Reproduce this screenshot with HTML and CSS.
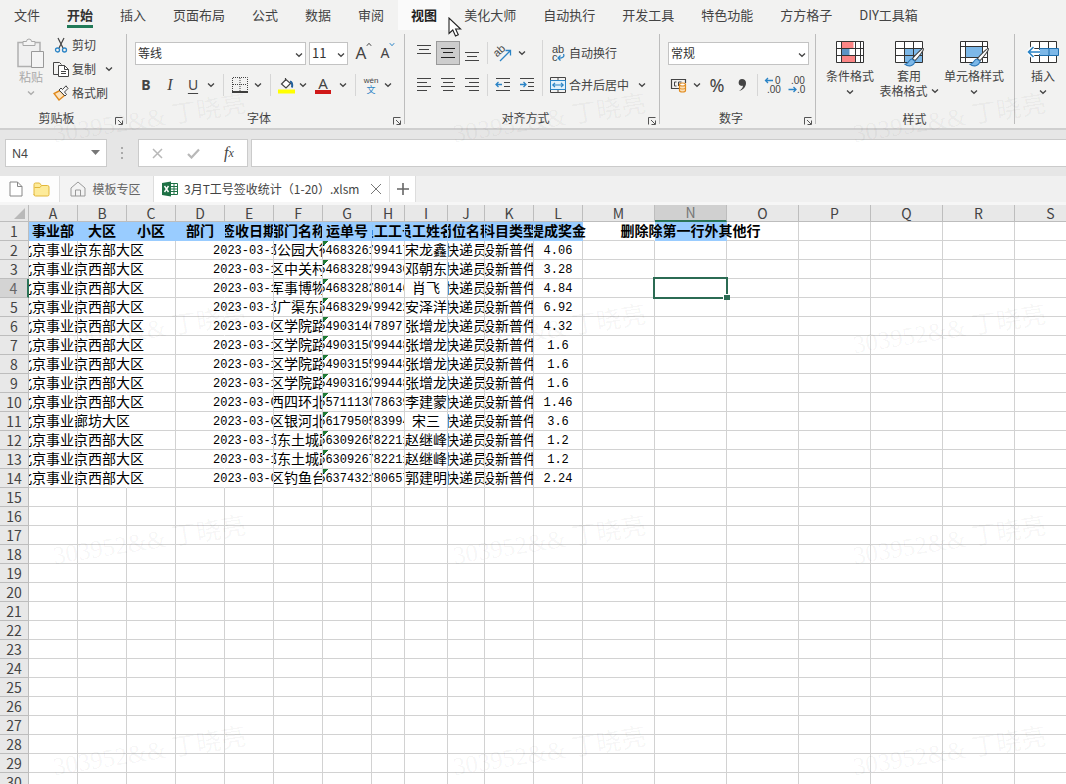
FILE: index.html
```html
<!DOCTYPE html>
<html lang="zh-CN">
<head>
<meta charset="utf-8">
<title>3月T工号签收统计（1-20）.xlsm</title>
<link rel="stylesheet" href="styles.css">
</head>
<body>
<svg class="defs" aria-hidden="true">
  <defs>
    <symbol id="chev" viewBox="0 0 8 6"><path d="M1 1.5 4 4.3 7 1.5" fill="none" stroke="#444" stroke-width="1.3"/></symbol>
    <symbol id="launch" viewBox="0 0 10 10"><path d="M1.5 8.5v-7h7M4 4l4 4M8.5 4.5v4h-4" fill="none" stroke="#555" stroke-width="1"/></symbol>
    <symbol id="brush" viewBox="0 0 20 20"><path d="M18.5 1.5c1 .8-5 8.500-8 11.500l-2.500-2C10.500 8 17.500.8 18.500 1.500z" fill="#fff" stroke="#444"/><path d="M7.500 11.500c-3 0-2 4-6.500 5 3 2.500 8.500 2 9.500-3z" fill="#7db8e8" stroke="#2b78b8"/></symbol>
  </defs>
</svg>
<div class="app">
  <nav class="tabs">
    <button class="tab">文件</button>
    <button class="tab active">开始</button>
    <button class="tab">插入</button>
    <button class="tab">页面布局</button>
    <button class="tab">公式</button>
    <button class="tab">数据</button>
    <button class="tab">审阅</button>
    <button class="tab hover">视图<svg class="pointer" viewBox="0 0 14 20"><path d="M1 1v15.500l3.800-3.500 2.700 6 2.800-1.200-2.700-5.800h5z" fill="#fff" stroke="#222" stroke-width="1.100"/></svg></button>
    <button class="tab">美化大师</button>
    <button class="tab">自动执行</button>
    <button class="tab">开发工具</button>
    <button class="tab">特色功能</button>
    <button class="tab">方方格子</button>
    <button class="tab">DIY工具箱</button>
  </nav>

  <div class="ribbon">
    <section class="group g-clip">
      <div class="clip-body">
        <button class="big paste">
          <svg width="28" height="31" viewBox="0 0 28 31"><path d="M1 4.500h22v24H1z" fill="#f0f0f0" stroke="#b0b0b0" stroke-width="1.500"/><path d="M6 7.500v-4h3.500a2.500 2.500 0 0 1 5 0H18v4z" fill="#f4f4f4" stroke="#a8a8a8"/><path d="M14.500 13.500h12v16h-12z" fill="#f4f4f4" stroke="#999"/></svg>
          <span>粘贴</span>
          <svg class="chev" width="8" height="6"><use href="#chev"/></svg>
        </button>
        <div class="clip-list">
          <button class="item"><svg width="16" height="16" viewBox="0 0 16 16"><path d="M5 1l5 10M11 1 6 11" stroke="#444" fill="none" stroke-width="1.200"/><circle cx="4.500" cy="13" r="2" fill="none" stroke="#2b84c6" stroke-width="1.300"/><circle cx="11.500" cy="13" r="2" fill="none" stroke="#2b84c6" stroke-width="1.300"/></svg>剪切</button>
          <button class="item"><svg width="16" height="16" viewBox="0 0 16 16"><path d="M5.500 13.500h-5V1.500h6l2 2" fill="none" stroke="#444"/><path d="M5.500 4.500h6l4 4v7h-10z" fill="#fff" stroke="#444"/><path d="M11.500 4.500v4h4M8 10.500h5M8 12.500h5" fill="none" stroke="#444"/></svg>复制<svg class="chev end" width="8" height="6"><use href="#chev"/></svg></button>
          <button class="item"><svg width="16" height="16" viewBox="0 0 16 16"><path d="M7 5.500 1 8.500l5 6.500 5.500-4.500z" fill="#fde3bd" stroke="#e08a1e" stroke-width="1.400"/><path d="M6 5l6 6 1.500-1.500-2-2.500L15 3.500 13 .8 9.500 4.500 8 3z" fill="#f6f6f6" stroke="#444"/></svg>格式刷</button>
        </div>
      </div>
      <footer class="caption"><span>剪贴板</span><button class="launch" aria-label="剪贴板设置"><svg width="10" height="10"><use href="#launch"/></svg></button></footer>
    </section>

    <section class="group g-font">
      <div class="rows">
        <div class="row">
          <label class="combo wide"><select aria-label="字体"><option>等线</option></select><svg width="8" height="6"><use href="#chev"/></svg></label>
          <label class="combo small"><select aria-label="字号"><option>11</option></select><svg width="8" height="6"><use href="#chev"/></svg></label>
          <button class="b24 grow" aria-label="增大字号"><span class="a-big">A</span><svg width="6" height="5" viewBox="0 0 6 5"><path d="M.8 3.800 3 1.300l2.200 2.500" fill="none" stroke="#444"/></svg></button>
          <button class="b24 grow" aria-label="减小字号"><span class="a-small">A</span><svg width="6" height="5" viewBox="0 0 6 5"><path d="M.8 1.200 3 3.700l2.200-2.500" fill="none" stroke="#2b84c6"/></svg></button>
        </div>
        <div class="row">
          <button class="b24 fmt bold">B</button><button class="b24 fmt italic">I</button><button class="b22 fmt under">U</button>
          <button class="drop" aria-label="下划线选项"><svg width="8" height="6"><use href="#chev"/></svg></button>
          <i class="sep far"></i>
          <button class="b22" aria-label="边框"><svg width="16" height="16" viewBox="0 0 16 16"><path d="M.5 14V.5h15V14M8 1v14M1 7.500h14" fill="none" stroke="#444" stroke-dasharray="1 1"/><path d="M0 15h16" stroke="#111" stroke-width="1.600"/></svg></button>
          <button class="drop" aria-label="边框选项"><svg width="8" height="6"><use href="#chev"/></svg></button>
          <i class="sep far"></i>
          <button class="b20" aria-label="填充颜色"><svg width="17" height="17" viewBox="0 0 17 17"><path d="M7.500 1v3M8 2.500 3.500 7 8 11l4.500-4.500z" fill="#fff" stroke="#444" stroke-width="1.200"/><path d="M12 4.500c2 .5 2.500 3 2 6" fill="none" stroke="#225f9c" stroke-width="2"/><path d="M0 12.500h17v4H0z" fill="#ff0"/></svg></button>
          <button class="drop" aria-label="填充选项"><svg width="8" height="6"><use href="#chev"/></svg></button>
          <button class="b26 fontcolor" aria-label="字体颜色"><span>A</span><i></i></button>
          <button class="drop" aria-label="字体颜色选项"><svg width="8" height="6"><use href="#chev"/></svg></button>
          <i class="sep far"></i>
          <button class="b20 pinyin"><span>wén</span><b>文</b></button>
          <button class="drop" aria-label="拼音选项"><svg width="8" height="6"><use href="#chev"/></svg></button>
        </div>
      </div>
      <footer class="caption"><span>字体</span><button class="launch" aria-label="字体设置"><svg width="10" height="10"><use href="#launch"/></svg></button></footer>
    </section>

    <section class="group g-align">
      <div class="split">
        <div class="rows">
          <div class="row">
            <button class="b24" aria-label="顶端对齐"><svg width="16" height="16" viewBox="0 0 16 16"><path d="M1 .5h14M3 4.500h10M1 8.500h14" stroke="#444" fill="none"/></svg></button>
            <button class="b24 on" aria-label="垂直居中"><svg width="16" height="16" viewBox="0 0 16 16"><path d="M1 3.500h14M3 7.500h10M1 12.500h14" stroke="#222" fill="none"/></svg></button>
            <button class="b24" aria-label="底端对齐"><svg width="16" height="16" viewBox="0 0 16 16"><path d="M1 7.500h14M3 11.500h10M1 15.500h14" stroke="#444" fill="none"/></svg></button>
            <i class="sep"></i>
            <button class="b24" aria-label="方向"><svg width="20" height="20" viewBox="0 0 20 20"><text x="1" y="11" font-size="11" fill="#444" transform="rotate(-42 7 9)">ab</text><path d="M7 18 17 8M12.500 7.500h5v5" fill="none" stroke="#2b84c6" stroke-width="1.300"/></svg></button>
            <button class="drop" aria-label="方向选项"><svg width="8" height="6"><use href="#chev"/></svg></button>
          </div>
          <div class="row">
            <button class="b24" aria-label="左对齐"><svg width="16" height="16" viewBox="0 0 16 16"><path d="M1 1.500h14M1 5.500h10M1 9.500h14M1 13.500h10" stroke="#444" fill="none"/></svg></button>
            <button class="b24" aria-label="居中"><svg width="16" height="16" viewBox="0 0 16 16"><path d="M1 1.500h14M3 5.500h10M1 9.500h14M3 13.500h10" stroke="#444" fill="none"/></svg></button>
            <button class="b24" aria-label="右对齐"><svg width="16" height="16" viewBox="0 0 16 16"><path d="M1 1.500h14M5 5.500h10M1 9.500h14M5 13.500h10" stroke="#444" fill="none"/></svg></button>
            <i class="sep"></i>
            <button class="b24" aria-label="减少缩进"><svg width="16" height="16" viewBox="0 0 16 16"><path d="M1 1.500h14M9 5.500h6M9 9.500h6M1 13.500h14" stroke="#444" fill="none"/><path d="M7 7.500H1M3.500 5 1 7.500 3.500 10" fill="none" stroke="#2b84c6" stroke-width="1.300"/></svg></button>
            <button class="b24" aria-label="增加缩进"><svg width="16" height="16" viewBox="0 0 16 16"><path d="M1 1.500h14M9 5.500h6M9 9.500h6M1 13.500h14" stroke="#444" fill="none"/><path d="M1 7.500h6M4.500 5 7 7.500 4.500 10" fill="none" stroke="#2b84c6" stroke-width="1.300"/></svg></button>
          </div>
        </div>
        <i class="sep tall"></i>
        <div class="rows">
          <div class="row"><button class="item"><svg width="16" height="18" viewBox="0 0 16 18"><text x="2" y="9" font-size="11" fill="#444">ab</text><text x="2" y="17" font-size="11" fill="#444">c</text><path d="M13.500 10c1.500 3-1.500 4.500-5.500 4M10.500 11.500 8 14l2.500 2.500" fill="none" stroke="#2b84c6" stroke-width="1.200"/></svg>自动换行</button></div>
          <div class="row"><button class="item"><svg width="16" height="16" viewBox="0 0 16 16"><path d="M.5.500h15v15H.5zM8 .5v3M8 12.500v3" fill="none" stroke="#444"/><path d="M.5 3.500h15v9H.5z" fill="#e3f1fb" stroke="#2b84c6"/><path d="M3 8h10M5 5.800 2.800 8 5 10.200M11 5.800 13.200 8 11 10.200" fill="none" stroke="#2b84c6" stroke-width="1.200"/></svg>合并后居中</button><button class="drop" aria-label="合并选项"><svg width="8" height="6"><use href="#chev"/></svg></button></div>
        </div>
      </div>
      <footer class="caption"><span>对齐方式</span><button class="launch" aria-label="对齐设置"><svg width="10" height="10"><use href="#launch"/></svg></button></footer>
    </section>

    <section class="group g-num">
      <div class="rows">
        <div class="row"><label class="combo format"><select aria-label="数字格式"><option>常规</option></select><svg width="8" height="6"><use href="#chev"/></svg></label></div>
        <div class="row">
          <button class="b22" aria-label="会计格式"><svg width="18" height="16" viewBox="0 0 18 16"><path d="M9 11.500H1.500v-9h14V6" fill="none" stroke="#444" stroke-width="1.200"/><path d="M6.500 5h-2v4h2M8.500 9V5h3" fill="none" stroke="#444"/><path d="M9.500 7.500v6c0 2 6 2 6 0v-6" fill="#fbe0b8" stroke="#e08a1e" stroke-width="1.200"/><ellipse cx="12.500" cy="7.500" rx="3" ry="1.500" fill="#fff" stroke="#e08a1e" stroke-width="1.200"/><path d="M9.500 10.500c0 2 6 2 6 0" fill="none" stroke="#e08a1e"/></svg></button>
          <button class="drop" aria-label="会计选项"><svg width="8" height="6"><use href="#chev"/></svg></button>
          <button class="b26 percent">%</button>
          <button class="b24" aria-label="千位分隔"><svg width="10" height="14" viewBox="0 0 10 14"><path d="M5 1a3.500 3.500 0 0 0-1 6.800c.8.300 1.500.1 2 0C5.800 10 4.500 11.500 2 13c4-1 7-4 7-8C9 2.500 7.200 1 5 1z" fill="#444"/></svg></button>
          <i class="sep"></i>
          <button class="b24" aria-label="增加小数位"><svg width="18" height="18" viewBox="0 0 18 18"><text x="11" y="8" font-size="10" fill="#444">0</text><text x="3" y="17" font-size="10" fill="#444">.00</text><path d="M9 4.500H1.500M4 2 1.500 4.500 4 7" fill="none" stroke="#2b84c6" stroke-width="1.300"/></svg></button>
          <button class="b24" aria-label="减少小数位"><svg width="18" height="18" viewBox="0 0 18 18"><text x="3" y="8" font-size="10" fill="#444">.00</text><text x="9" y="17" font-size="10" fill="#444">.0</text><path d="M.5 13.500H8M5.500 11 8 13.500 5.500 16" fill="none" stroke="#2b84c6" stroke-width="1.300"/></svg></button>
        </div>
      </div>
      <footer class="caption"><span>数字</span><button class="launch" aria-label="数字设置"><svg width="10" height="10"><use href="#launch"/></svg></button></footer>
    </section>

    <section class="group g-style">
      <div class="bigs">
        <button class="big w60">
          <svg width="28" height="28" viewBox="0 0 28 28"><path d="M.5 1.500h27v21H.5z" fill="#fff"/><path d="M5.500 1.500h12v7h-12zM5.500 15.500h14v7h-14z" fill="#fa8585"/><path d="M5.500 8.500h8v7h-8z" fill="#5c93c4"/><path d="M.5 1.500h27v21H.5zM.5 8.500h27M.5 15.500h27M5.500 1.500v21M19.500 1.500v21M24.500 1.500v21" fill="none" stroke="#333"/></svg>
          <span>条件格式</span><svg class="chev" width="8" height="6"><use href="#chev"/></svg>
        </button>
        <button class="big w58">
          <svg width="31" height="28" viewBox="0 0 31 28"><path d="M1.500 1.500h27v21h-27z" fill="#fff"/><path d="M10.500 8.500h18v14h-18z" fill="#7db8e8"/><path d="M1.500 1.500h27v21h-27zM1.500 8.500h27M1.500 15.500h27M10.500 1.500v21M19.500 1.500v21" fill="none" stroke="#333"/><use href="#brush" x="10" y="7" width="21" height="21"/></svg>
          <span>套用</span><span>表格格式<svg class="inline" width="8" height="6"><use href="#chev"/></svg></span>
        </button>
        <button class="big w72">
          <svg width="31" height="28" viewBox="0 0 31 28"><path d="M1.500 1.500h27v21h-27z" fill="#fff"/><path d="M6.500 6.500h17v11h-17z" fill="#7db8e8"/><path d="M1.500 1.500h27v21h-27zM1.500 6.500h27M1.500 17.500h27M6.500 1.500v21M23.500 1.500v21" fill="none" stroke="#333"/><use href="#brush" x="10" y="7" width="21" height="21"/></svg>
          <span>单元格样式</span><svg class="chev" width="8" height="6"><use href="#chev"/></svg>
        </button>
      </div>
      <footer class="caption"><span>样式</span></footer>
    </section>

    <section class="group g-cells">
      <div class="bigs">
        <button class="big w48">
          <svg width="32" height="28" viewBox="0 0 32 28"><path d="M3.500 1.500h26v21h-26z" fill="#fff"/><path d="M3.500 1.500h26v21h-26zM3.500 8.500h26M3.500 15.500h26M12.500 1.500v21M21.500 1.500v21" fill="none" stroke="#333"/><path d="M12.500 8.500h19v7h-19z" fill="#7db8e8" stroke="#1f6fae"/><path d="M22 8.500v7" stroke="#1f6fae"/><path d="M13 12H1.500M6.500 6.500 1.500 12l5 5.500" fill="none" stroke="#fff" stroke-width="4"/><path d="M13 12H1.500M6.500 7 1.500 12l5 5" fill="none" stroke="#2b84c6" stroke-width="1.600"/></svg>
          <span>插入</span><svg class="chev" width="8" height="6"><use href="#chev"/></svg>
        </button>
      </div>
    </section>
  </div>

  <div class="formula">
    <label class="namebox"><input aria-label="名称框" value="N4"><svg width="9" height="5" viewBox="0 0 9 5"><path d="M0 0h9L4.500 5z" fill="#777"/></svg></label>
    <svg class="dots" width="3" height="13" viewBox="0 0 3 13"><path d="M0 0h2v2H0zM0 5h2v2H0zM0 10h2v2H0z" fill="#aaa"/></svg>
    <div class="fxbox">
      <button aria-label="取消"><svg width="11" height="11" viewBox="0 0 11 11"><path d="M1 1l9 9M10 1l-9 9" stroke="#b8b8b8" stroke-width="1.500"/></svg></button>
      <button aria-label="输入"><svg width="13" height="11" viewBox="0 0 13 11"><path d="M1 6l3.500 3.500L12 1.500" fill="none" stroke="#b8b8b8" stroke-width="2.200"/></svg></button>
      <button class="fx" aria-label="插入函数">f<sub>x</sub></button>
    </div>
    <input class="formula-input" aria-label="编辑栏">
  </div>

  <div class="doctabs">
    <div class="quick">
      <button aria-label="新建"><svg width="14" height="16" viewBox="0 0 14 16"><path d="M1 1h7.500L13 5.500V15H1zM8.500 1v4.500H13" fill="#fff" stroke="#888"/></svg></button>
      <button aria-label="打开"><svg width="17" height="15" viewBox="0 0 17 15"><path d="M1 13V2.500Q1 1 2.500 1h4l2 2.500h6q1.500 0 1.500 1.500v7.500q0 1.500-1.500 1.500h-12Q1 14 1 12.500z" fill="#fdeb9a" stroke="#e2b73c"/><path d="M8.500 3.500 7 5.500H1.500" fill="none" stroke="#e2b73c"/></svg></button>
    </div>
    <button class="doc home"><svg width="16" height="16" viewBox="0 0 16 16"><path d="M1 7l7-6 7 6v8H1zM5.500 15V9h5v6" fill="none" stroke="#999"/></svg>模板专区</button>
    <div class="doc current">
      <svg width="16" height="16" viewBox="0 0 16 16"><path d="M8 2.500h7.500v11H8z" fill="#fff" stroke="#1e7145"/><path d="M9 5.500h6M9 8h6M9 10.500h6M12 3v10" stroke="#1e7145"/><path d="M0 2 9 .5v15L0 14z" fill="#1e7145"/><path d="M2.500 5l4 6M6.500 5l-4 6" stroke="#fff" stroke-width="1.400"/></svg>
      <span>3月T工号签收统计（1-20）.xlsm</span>
      <button aria-label="关闭"><svg width="12" height="12" viewBox="0 0 12 12"><path d="M1 1l10 10M11 1 1 11" stroke="#777"/></svg></button>
    </div>
    <button class="add" aria-label="新建标签"><svg width="12" height="12" viewBox="0 0 12 12"><path d="M6 0v12M0 6h12" stroke="#666" stroke-width="1.600"/></svg></button>
  </div>

  <main class="sheet"><table class="grid" id="grid"></table></main>
  <div class="marks" id="marks"></div>
</div>
<script src="sheet.js"></script>
</body>
</html>
```

FILE: styles.css
```css
* { box-sizing: border-box; }
body {
  margin: 0;
  font: 12px/16px "Noto Sans CJK SC", sans-serif;
  color: #444;
  background: #fff;
}
button, select, input { font: inherit; color: inherit; margin: 0; padding: 0; border: 0; background: none; border-radius: 0; }
button { display: flex; align-items: center; justify-content: center; white-space: nowrap; }
svg { display: block; flex: none; font-family: "Liberation Sans", sans-serif; }
.defs { position: absolute; width: 0; height: 0; }
.app { position: relative; height: 100vh; display: flex; flex-direction: column; overflow: hidden; }

/* ribbon tabs */
.tabs { display: flex; gap: 1px; padding-left: 1px; height: 30px; background: #f2f2f1; flex: none; }
.tab { position: relative; padding: 0 13px; font-size: 13px; line-height: 30px; }
.tab.active { font-weight: 700; color: #333; }
.tab.active::after { content: ""; position: absolute; left: 13px; right: 13px; bottom: 2px; height: 3px; background: #217a58; }
.tab.hover { font-weight: 700; color: #222; background: #fafafa; }
.pointer { position: absolute; left: 50px; top: 17px; width: 14px; height: 20px; z-index: 2; }

/* ribbon groups */
.ribbon { display: flex; height: 100px; flex: none; background: #f2f2f1; border-bottom: 2px solid #cfcfcf; }
.group { position: relative; display: flex; flex-direction: column; justify-content: space-between; flex: none; }
.group::after { content: ""; position: absolute; right: 0; top: 4px; bottom: 4px; width: 1px; background: #bdbdbd; }
.group:last-child::after { display: none; }
.g-clip { width: 127px; }
.g-font { width: 278px; }
.g-align { width: 255px; }
.g-num { width: 156px; }
.g-style { width: 199px; }
.g-cells { flex: 1; }
.caption { display: flex; align-items: center; height: 21px; text-align: center; padding-right: 2px; }
.caption span { flex: 1; }
.launch { width: 12px; height: 16px; align-items: flex-end; }

.rows { display: flex; flex-direction: column; gap: 8px; padding-top: 11px; }
.row { display: flex; align-items: center; height: 24px; }
.g-font .rows { padding-left: 7px; }
.g-num .rows { padding-left: 8px; }
.split { display: flex; padding-left: 7px; }
.sep { width: 1px; height: 22px; margin: 0 3px; background: #d6d6d6; flex: none; }
.sep.far { margin: 0 5px; }
.sep.tall { height: 56px; margin-top: 10px; }
.b20, .b22, .b24, .b26 { height: 24px; flex: none; }
.b20 { width: 20px; }
.b22 { width: 22px; }
.b24 { width: 24px; }
.b26 { width: 26px; }
.on { background: #cdcdcd; border: 1px solid #999; }
.drop { width: 14px; height: 24px; flex: none; }
.item { gap: 3px; height: 24px; }
.split .item { padding-left: 4px; }
.split .item + .drop { margin-left: 6px; }

.clip-body { display: flex; padding-top: 3px; }
.clip-list { display: flex; flex-direction: column; align-items: flex-start; padding-left: 5px; }
.end { margin-left: 6px; }
.big { flex-direction: column; justify-content: flex-start; height: 70px; line-height: 15px; flex: none; }
.big > span { display: flex; align-items: center; }
.big .chev { margin-top: 6px; }
.big .inline { margin-left: 3px; }
.paste { width: 48px; padding: 5px 0 0 14px; color: #aaa; }
.paste .chev { opacity: .4; }
.bigs { display: flex; padding: 10px 0 0 4px; }
.w48 { width: 48px; }
.w58 { width: 58px; }
.w60 { width: 60px; }
.w72 { width: 72px; }

.combo { position: relative; display: block; height: 23px; background: #fff; border: 1px solid #c3c3c3; }
.combo select { appearance: none; width: 100%; height: 100%; padding-left: 2px; color: #333; }
.combo svg { position: absolute; right: 2px; top: 9px; pointer-events: none; }
.g-font .combo { margin-left: 1px; }
.g-font .combo + .combo { margin-left: 3px; }
.wide { width: 171px; }
.small { width: 39px; }
.small select { font-size: 13px; }
.format { width: 141px; }
.grow { align-items: flex-start; padding-top: 1px; }
.a-big, .a-small, .fontcolor span { font-family: "Noto Sans", sans-serif; }
.combo + .grow { margin-left: 4px; }
.a-big { font-size: 17px; line-height: 22px; }
.a-small { font-size: 14px; line-height: 22px; }
.fmt { font-family: "Noto Sans", sans-serif; font-size: 14px; }
.bold { font-weight: 700; }
.italic { font-family: "Liberation Serif", serif; font-style: italic; font-size: 16px; }
.under { text-decoration: underline; text-underline-offset: 3px; }
.fontcolor { flex-direction: column; }
.fontcolor span { font-size: 15px; line-height: 14px; }
.fontcolor i { width: 16px; height: 4px; background: #d01818; }
.pinyin { flex-direction: column; line-height: 9px; }
.pinyin span { font-size: 8px; line-height: 8px; font-family: "Liberation Sans", sans-serif; }
.pinyin b { font-size: 9px; font-weight: 400; color: #2b84c6; }
.percent { font-size: 18px; font-family: "Noto Sans", sans-serif; }

/* formula bar */
.formula { display: flex; align-items: center; height: 46px; flex: none; padding-left: 5px; background: #e6e6e6; }
.namebox { position: relative; width: 102px; height: 28px; background: #fff; border: 1px solid #cbcbcb; }
.namebox input { width: 100%; height: 100%; padding-left: 6px; font-family: "Noto Sans", sans-serif; }
.namebox svg { position: absolute; right: 6px; top: 10px; }
.dots { margin: 0 14px; }
.fxbox { display: flex; align-items: center; width: 110px; height: 28px; background: #fff; border: 1px solid #cbcbcb; }
.fxbox button { flex: 1; height: 26px; }
.fxbox .fx { font: italic 16px/20px "Liberation Serif", serif; }
.fx sub { font-size: 12px; line-height: 12px; }
.formula-input { flex: 1; height: 28px; margin-left: 3px; background: #fff; border: 1px solid #cbcbcb; border-right: 0; min-width: 0; }

/* document tabs */
.doctabs { display: flex; height: 26px; flex: none; background: #f0f0f0; }
.quick { display: flex; align-items: center; gap: 10px; width: 60px; padding-left: 9px; background: #fdfdfd; border-right: 1px solid #ddd; }
.doc { display: flex; align-items: center; }
.home { width: 93px; gap: 6px; padding-right: 2px; color: #666; background: #f3f3f3; }
.current { gap: 6px; padding: 0 7px 0 8px; background: #fff; border-left: 1px solid #ddd; border-right: 1px solid #ddd; }
.current button { margin-left: 5px; }
.add { width: 26px; background: #fff; border-right: 1px solid #ddd; }

/* worksheet */
.sheet { flex: 1; min-height: 0; overflow: hidden; padding-top: 3px; background: #f6f6f6; }
.grid { table-layout: fixed; border-collapse: separate; border-spacing: 0; width: 0; background: #fff; color: #000; }
.c29 { width: 29px; }
.c33 { width: 33px; }
.c37 { width: 37px; }
.c43 { width: 43px; }
.c49 { width: 49px; }
.c72 { width: 72px; }
.grid th, .grid td { padding: 0; height: 19px; border-right: 1px solid #d2d2d2; border-bottom: 1px solid #d2d2d2; white-space: nowrap; line-height: 18px; }
.grid th { font-size: 14px; font-weight: 400; color: #444; background: #e8e8e8; border-color: #bdbdbd; }
.grid thead th { height: 17px; line-height: 16px; }
.corner svg { margin-left: auto; margin-right: 3px; }
.grid thead th.sel { color: #777; background: #d0d0d0; border-bottom: 2px solid #2b7457; line-height: 15px; }
.grid tbody th.sel { color: #666; background: #d4d4d4; border-right: 2px solid #2b7457; }
.grid .cell { display: flex; justify-content: center; height: 18px; overflow: hidden; font-size: 14px; line-height: 16px; }
.grid .num { font-family: "Liberation Mono", monospace; font-size: 12px; line-height: 20px; }
.title { font-weight: 700; }
.grid td.fill { background: #99ccff; border-color: #99ccff; }
.grid td.open { border-right-color: transparent; }
.grid .spill-right { overflow: visible; clip-path: inset(0 -60px 0 0); }
.grid .spill-left { overflow: visible; clip-path: inset(0 0 0 -48px); }
.grid .spill-both { overflow: visible; }
.flag { background: linear-gradient(135deg, #1e7a34 4px, transparent 4px); }
.picked { position: relative; }
.picked::before { content: ""; position: absolute; inset: -2px; border: 2px solid #2b6b53; }
.picked::after { content: ""; position: absolute; right: -4px; bottom: -3px; width: 6px; height: 5px; background: #2b6b53; border: 1px solid #fff; border-width: 1px 0 0 1px; }

/* repeated watermark */
.marks { position: absolute; top: 13px; left: -50px; right: -134px; display: grid; grid-template-columns: repeat(auto-fill, 400px); grid-auto-rows: 211px; pointer-events: none; }
.marks span { place-self: center; font: 25px/32px "Liberation Serif", "Noto Sans CJK SC", serif; color: rgba(0, 0, 0, .045); transform: rotate(-9deg); }
```

FILE: sheet.js
```js
const cols = [['A',49],['B',49],['C',49],['D',49],['E',49],['F',49],['G',49],['H',33],['I',43],['J',37],['K',49],['L',49],
  ['M',72],['N',72],['O',72],['P',72],['Q',72],['R',72],['S',72]];
const titles = ['事业部','大区','小区','部门','签收日期','部门名称','运单号','员工工号','员工姓名','岗位名称','科目类型','提成奖金','','删除除第一行外其他行'];
const west = '北京西部大区';
const data = [
  ['北京东部大区','2023-03-11','部公园大街','54683261','799417','宋龙鑫','4.06'],
  [west,'2023-03-11','区中关村','54683282','799430','邓朝东','3.28'],
  [west,'2023-03-11','军事博物','54683282','780146','肖飞','4.84'],
  [west,'2023-03-11','部广渠东路','54683294','799422','安泽洋','6.92'],
  [west,'2023-03-01','区学院路','54903146','7897','张增龙','4.32'],
  [west,'2023-03-11','区学院路','54903150','799448','张增龙','1.6'],
  [west,'2023-03-11','区学院路','54903155','799448','张增龙','1.6'],
  [west,'2023-03-11','区学院路','54903162','799448','张增龙','1.6'],
  [west,'2023-03-01','西四环北','55711130','778639','李建蒙','1.46'],
  ['廊坊大区','2023-03-01','区银河北','56179505','783994','宋三','3.6'],
  [west,'2023-03-11','部东土城路','56309265','782211','赵继峰','1.2'],
  [west,'2023-03-11','部东土城路','56309267','782211','赵继峰','1.2'],
  [west,'2023-03-01','区钓鱼台','56374321','780657','郭建明','2.24'],
];
const cell = (text, inner = '', outer = '') =>
  `<td class="${outer}">${text ? `<div class="cell ${inner}">${text}</div>` : ''}</td>`;

let html = '<colgroup><col class="c29">' + cols.map(c => `<col class="c${c[1]}">`).join('') + '</colgroup><thead><tr>' +
  '<th class="corner"><svg width="11" height="11" viewBox="0 0 11 11"><path d="M11 0v11H0z" fill="#b9b9b9"/></svg></th>' +
  cols.map(c => `<th class="${c[0] === 'N' ? 'sel' : ''}">${c[0]}</th>`).join('') + '</tr></thead><tbody>';

for (let r = 1; r <= 30; r++) {
  html += `<tr><th class="${r === 4 ? 'sel' : ''}">${r}</th>`;
  const d = data[r - 2];
  cols.forEach((c, i) => {
    if (r === 1) {
      const spill = c[0] === 'L' ? 'spill-right' : c[0] === 'N' ? 'spill-both' : '';
      html += cell(titles[i], 'title ' + spill, i < 12 || c[0] === 'N' ? 'fill' : i === 12 ? 'open' : '');
    } else if (c[0] === 'N' && r === 4) {
      html += cell('', '', 'picked');
    } else if (d && i < 12) {
      html += [
        () => cell('北京事业部'), () => cell(d[0], 'spill-right', 'open'), () => cell(''), () => cell('', '', 'open'),
        () => cell(d[1], 'num spill-left'), () => cell(d[2]), () => cell(d[3], 'num', 'flag'), () => cell(d[4], 'num'),
        () => cell(d[5]), () => cell('快递员'), () => cell('设新普件'), () => cell(d[6], 'num'),
      ][i]();
    } else {
      html += cell('');
    }
  });
  html += '</tr>';
}
document.getElementById('grid').innerHTML = html + '</tbody>';
document.getElementById('marks').innerHTML = '<span>303952&amp;&amp; 丁晓亮</span>'.repeat(12);
```
